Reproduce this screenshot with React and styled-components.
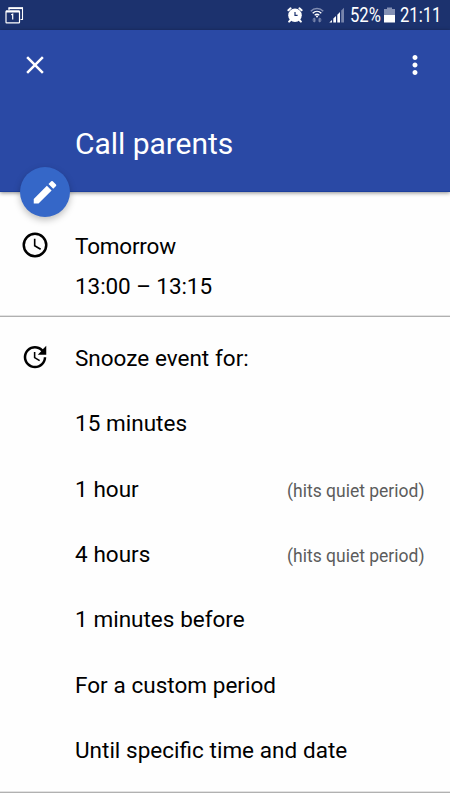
import React from 'react';
import styled, { createGlobalStyle } from "styled-components";
import { MdClose, MdEdit, MdMoreVert } from "react-icons/md";

const snoozeOptions = [
  { title: "15 minutes" },
  { title: "1 hour", note: "(hits quiet period)" },
  { title: "4 hours", note: "(hits quiet period)" },
  { title: "1 minutes before" },
  { title: "For a custom period" },
  { title: "Until specific time and date" },
];

const App = () => {
  return (
    <Screen>
      <GlobalStyle />
      <StatusBar />
      <Header title="Call parents" />
      <TimeSection>
        <IconSlot>
          <ClockIcon />
        </IconSlot>
        <div>
          <TimeLine $spacing="-0.2px">Tomorrow</TimeLine>
          <TimeLine $spacing="-0.08px">13:00 – 13:15</TimeLine>
        </div>
      </TimeSection>
      <SnoozeSection>
        <SnoozeRow>
          <IconSlot>
            <UpdateIcon />
          </IconSlot>
          <RowTitle>Snooze event for:</RowTitle>
        </SnoozeRow>
        {snoozeOptions.map(({ title, note }) => (
          <SnoozeRow key={title}>
            <IconSlot />
            <RowTitle>{title}</RowTitle>
            {note && <Note>{note}</Note>}
          </SnoozeRow>
        ))}
      </SnoozeSection>
    </Screen>
  );
};

const StatusBar = () => {
  return (
    <StatusContainer>
      <CalendarIcon />
      <StatusGroup>
        <AlarmIcon />
        <WifiIcon />
        <SignalIcon />
        <StatusText $width="29px">52%</StatusText>
        <BatteryIcon />
        <StatusText $width="41px">21:11</StatusText>
      </StatusGroup>
    </StatusContainer>
  );
};

const Header = ({ title }) => {
  return (
    <HeaderContainer>
      <Toolbar>
        <IconButton aria-label="Close">
          <MdClose size={30} />
        </IconButton>
        <IconButton aria-label="More">
          <MdMoreVert size={30} />
        </IconButton>
      </Toolbar>
      <EventTitle>{title}</EventTitle>
      <EditButton aria-label="Edit">
        <PencilIcon />
      </EditButton>
    </HeaderContainer>
  );
};

const PencilIcon = () => (
  <svg width="30" height="30" viewBox="0 0 24 24" fill="#fff">
    <path d="M3 17.5V21.2H6.8L17.3 10.7L13.5 6.9ZM14.8 5.6L17 3.4Q17.6 2.9 18.2 3.4L20.8 6Q21.3 6.6 20.8 7.2L18.6 9.4Z" />
  </svg>
);

const CalendarIcon = () => (
  <svg width="19" height="17" viewBox="0 0 19 17" fill="none" stroke="#fff">
    <path d="M4 3V1H17.5V12.5H15.5" strokeWidth="1.1" />
    <path d="M3.5 1.2H18" strokeWidth="1.8" />
    <rect x="1" y="4" width="13.5" height="11.8" rx="0.6" strokeWidth="1.2" />
    <path d="M1 4.5H14.5" strokeWidth="2" />
    <path d="M6.2 7.8L7.7 7.2V12.6" strokeWidth="1.2" />
  </svg>
);

const AlarmIcon = () => (
  <svg width="16" height="16" viewBox="0 0 16 16">
    <circle cx="8" cy="8.2" r="6.8" fill="#fff" />
    <g stroke="#fff" strokeLinecap="round" strokeWidth="2">
      <path d="M1.4 3.3L3.6 1.3M14.6 3.3L12.4 1.3M3.6 13L2.1 14.6M12.4 13L13.9 14.6" />
    </g>
    <path d="M8 5V8.4H10.6" fill="none" stroke="#1c326e" strokeWidth="1.2" />
  </svg>
);

const WifiIcon = () => (
  <svg width="14" height="16" viewBox="0 0 14 16" fill="none">
    <path d="M0.8 4.2C4.3 0.6 9.7 0.6 13.2 4.2" stroke="#8490b4" strokeWidth="1.5" />
    <path d="M2.7 6.2C5.2 3.7 8.8 3.7 11.3 6.2" stroke="#fff" strokeWidth="1.4" />
    <path d="M4.7 8.2C6.1 7 7.9 7 9.3 8.2" stroke="#fff" strokeWidth="1.3" />
    <circle cx="7" cy="9.4" r="1" fill="#fff" />
    <path d="M4.3 10.6L6.4 12.4H5V13.6H6.4L4.3 15.6L2.2 13.6H3.6V12.4H2.2ZM9.7 10.6L11.8 12.4H10.4V13.6H11.8L9.7 15.6L7.6 13.6H9V12.4H7.6Z" fill="#7784ab" />
  </svg>
);

const SignalIcon = () => (
  <svg width="16" height="16" viewBox="0 0 16 16">
    <path d="M0.3 15.5L3 12.9V15.5ZM4.3 15.5V11.6L7 8.9V15.5ZM8.3 15.5V7.7L11 5V15.5Z" fill="#fff" />
    <path d="M12.2 15.5V3.5L15 0.7V15.5Z" fill="#7784ab" />
  </svg>
);

const BatteryIcon = () => (
  <svg width="11" height="16" viewBox="0 0 11 16">
    <path d="M3 0.5H8V2H11V8H0V2H3Z" fill="#8490b4" />
    <path d="M0 8H11V15.5H0Z" fill="#fff" />
  </svg>
);

const ClockIcon = () => (
  <svg width="30" height="30" viewBox="0 0 24 24" fill="none" stroke="#000">
    <circle cx="12" cy="12" r="9" strokeWidth="2" />
    <path d="M11.75 7V12.6L16.5 15.45" strokeWidth="1.3" />
  </svg>
);

const UpdateIcon = () => (
  <svg width="30" height="30" viewBox="0 0 24 24" fill="#000">
    <path d="M21 10.12h-6.78l2.74-2.82c-2.73-2.7-7.15-2.8-9.88-.1-2.73 2.71-2.73 7.08 0 9.79s7.15 2.71 9.88 0C18.32 15.65 19 14.08 19 12.1h2c0 1.98-.88 4.55-2.64 6.29-3.51 3.48-9.21 3.48-12.72 0-3.5-3.47-3.53-9.11-.02-12.58s9.14-3.47 12.65 0L21 3v7.12z" />
    <path d="M11.7 8v4.5l4 2.4" fill="none" stroke="#000" strokeWidth="1.25" />
  </svg>
);

const GlobalStyle = createGlobalStyle`
  * {
    box-sizing: border-box;
  }

  body {
    margin: 0;
    background-color: #fefefe;
    font-family: Roboto, "Liberation Sans", sans-serif;
  }

  svg {
    display: block;
    flex-shrink: 0;
  }
`;

const Screen = styled.main`
  width: 450px;
  height: 800px;
  overflow: hidden;
  background-color: #fefefe;
  color: #000;
`;

const StatusContainer = styled.div`
  display: flex;
  align-items: center;
  justify-content: space-between;
  height: 30px;
  padding: 0 9px 0 5px;
  background-color: #1c326e;
`;

const StatusGroup = styled.div`
  display: flex;
  align-items: center;
  gap: 5px;

  svg:nth-of-type(2) {
    margin-left: 2px;
  }
`;

// Narrow digits: the box keeps the squeezed width
const StatusText = styled.span`
  width: ${({ $width }) => $width};
  color: #fff;
  font-size: 20px;
  line-height: 30px;
  white-space: nowrap;
  transform: scaleX(0.83);
  transform-origin: left center;
`;

const HeaderContainer = styled.header`
  position: relative;
  height: 162px;
  background-color: #2a49a5;
  border-bottom: 1px solid #1d3f9c;
  box-shadow: 0 1px 4px rgba(0, 0, 0, 0.45);
  color: #fff;
`;

const Toolbar = styled.div`
  display: flex;
  justify-content: space-between;
  padding: 20px 20px 0;
`;

const IconButton = styled.button`
  padding: 0;
  border: none;
  background: none;
  color: inherit;
`;

const EventTitle = styled.h1`
  margin: 44px 0 0 75px;
  font-size: 30px;
  font-weight: 400;
  line-height: 40px;
  letter-spacing: -0.05px;
`;

//Кнопка лежит на границе хэдера
const EditButton = styled(IconButton)`
  position: absolute;
  left: 20px;
  bottom: -26px;
  display: flex;
  align-items: center;
  justify-content: center;
  width: 50px;
  height: 50px;
  border-radius: 50%;
  background-color: #3567c8;
  box-shadow: 0 3px 7px rgba(0, 0, 0, 0.25);
`;

const TimeSection = styled.section`
  display: flex;
  height: 125px;
  padding-top: 34px;
  border-bottom: 1px solid #b0b0b0;
  box-shadow: inset 0 -1px #e2e2e2;
`;

const IconSlot = styled.div`
  display: flex;
  flex-shrink: 0;
  width: 75px;
  padding: 4px 0 0 20px;
`;

const TimeLine = styled.p`
  margin: 0;
  font-size: 22.5px;
  line-height: 40px;
  letter-spacing: ${({ $spacing }) => $spacing};
`;

const SnoozeSection = styled.section`
  height: 476px;
  padding-top: 21px;
  border-bottom: 1px solid #b0b0b0;
  box-shadow: inset 0 -1px #e2e2e2;
`;

const SnoozeRow = styled.div`
  display: flex;
  height: 65.33px;
  padding-right: 25.5px;
`;

const RowTitle = styled.span`
  flex: 1;
  font-size: 22.5px;
  line-height: 40px;
  word-spacing: 0.2px;
`;

const Note = styled.span`
  color: #5c5c5c;
  font-size: 17.5px;
  line-height: 44px;
`;

export default App;
